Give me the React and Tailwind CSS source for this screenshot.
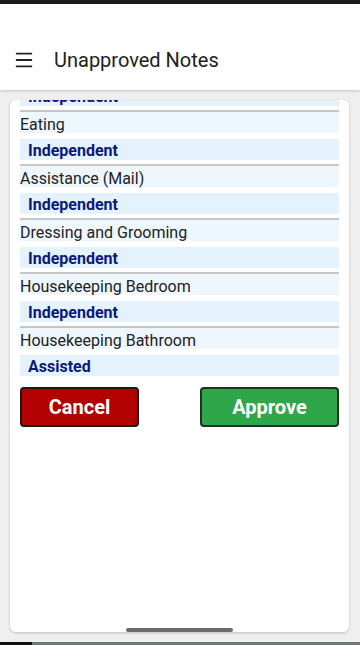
import { Menu } from "lucide-react";

const notes = [
  { title: "Eating", value: "Independent" },
  { title: "Assistance (Mail)", value: "Independent" },
  { title: "Dressing and Grooming", value: "Independent" },
  { title: "Housekeeping Bedroom", value: "Independent" },
  { title: "Housekeeping Bathroom", value: "Assisted" },
];

export default function App() {
  return (
    <div
      className="relative flex h-[645px] w-[360px] flex-col overflow-hidden bg-[#efefef]"
      style={{ fontFamily: "Roboto, 'Liberation Sans', sans-serif" }}
    >
      {/* Status bar strip */}
      <div className="h-[4px] bg-[#1c1c1c]" />

      {/* Header */}
      <div className="z-10 flex h-[86px] items-end bg-white pb-[17px] shadow-[0_1px_3px_rgba(0,0,0,0.18)]">
        <div className="flex items-center">
          <Menu className="ml-[13px] h-[22px] w-[22px] text-[#212121]" strokeWidth={2} />
          <h1 className="ml-[19px] text-[20px] leading-[26px] text-[#212121]">
            Unapproved Notes
          </h1>
        </div>
      </div>

      {/* Card (list scrolled a little) */}
      <div className="mt-[10px] mb-[10px] ml-[10px] mr-[11px] flex-1 overflow-hidden rounded-[6px] bg-white shadow-[0_1px_3px_rgba(0,0,0,0.2)]">
        <div className="-mt-[15px] px-[10px]">
          <div className="h-[21px] bg-[#e3f2fd] pl-[8px] pt-[4px] text-[16px] leading-[16px] font-bold text-[#0b1a7a]">
            Independent
          </div>
          {notes.map((n) => (
            <div key={n.title}>
              <div className="mt-[4px] h-[2px] bg-[#c6c6c6]" />
              <div className="h-[21px] bg-[#eef6fe] pt-[5px] text-[16px] leading-[16px] text-[#222]">
                {n.title}
              </div>
              <div className="mt-[6px] h-[21px] bg-[#e3f2fd] pl-[8px] pt-[4px] text-[16px] leading-[16px] font-bold text-[#0b1a7a]">
                {n.value}
              </div>
            </div>
          ))}

          {/* Actions */}
          <div className="mt-[11px] flex justify-between">
            <button className="h-[40px] w-[119px] rounded-[4px] border-2 border-[#241414] bg-[#b30000] text-[20px] font-bold text-white">
              Cancel
            </button>
            <button className="h-[40px] w-[139px] rounded-[4px] border-2 border-[#1c3322] bg-[#2ea64a] text-[20px] font-bold text-white">
              Approve
            </button>
          </div>
        </div>
      </div>

      {/* Home indicator */}
      <div className="absolute bottom-[13px] left-[126px] h-[4px] w-[107px] rounded-full bg-[#6b6b6b]" />

      {/* Bottom frame strip */}
      <div className="flex h-[3px]">
        <div className="w-[32px] bg-[#111]" />
        <div className="flex-1 bg-[#6f7a76]" />
      </div>
    </div>
  );
}
